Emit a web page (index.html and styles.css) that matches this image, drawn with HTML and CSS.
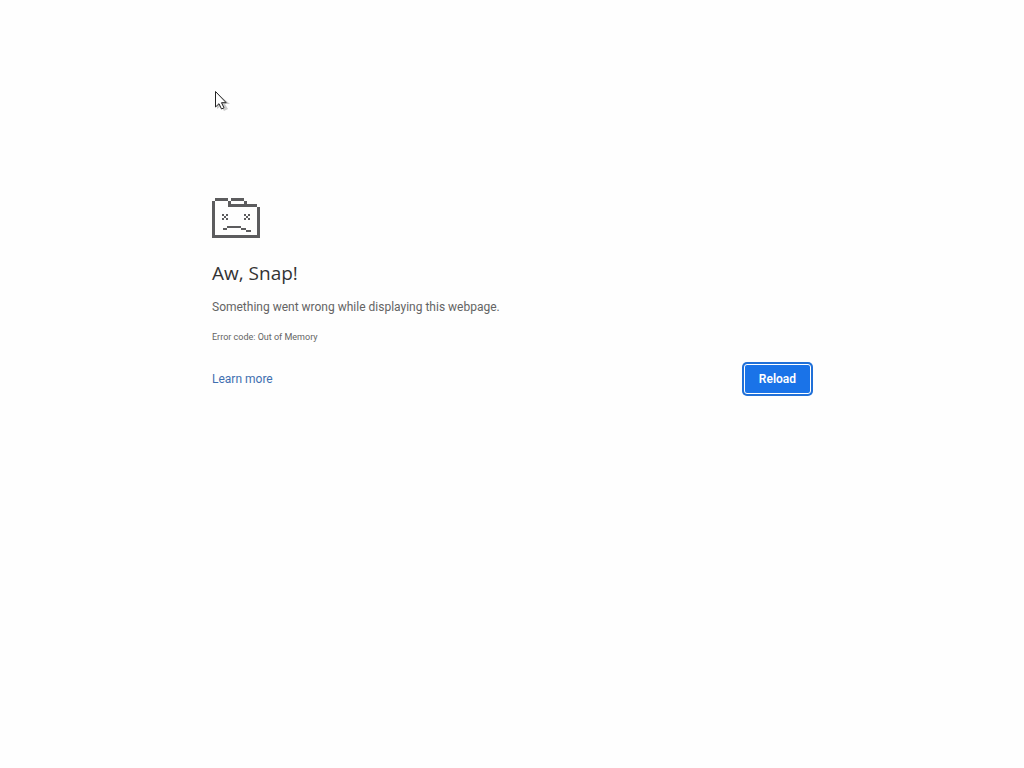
FILE: index.html
```html
<!DOCTYPE html>
<html lang="en">
<head>
    <meta charset="UTF-8">
    <meta name="viewport" content="width=device-width, initial-scale=1.0">
    <title>Aw, Snap!</title>
    <link rel="stylesheet" href="styles.css">
</head>
<body>
    <main class="container">
        <svg class="icon" viewBox="0 0 48 40" aria-hidden="true" shape-rendering="crispEdges">
            <!-- folder outline -->
            <path d="M3 0h13v3H3zM19 0h13v3H19zM16 3h3v3h-3zM32 3h3v3h-3zM16 6h29v3H16zM0 3h3v37H0zM45 9h3v31h-3zM3 37h42v3H3z"/>
            <!-- eyes -->
            <path d="M10 16h2v2h-2zM14 16h2v2h-2zM12 18h2v2h-2zM10 20h2v2h-2zM14 20h2v2h-2z"/>
            <path d="M32 16h2v2h-2zM36 16h2v2h-2zM34 18h2v2h-2zM32 20h2v2h-2zM36 20h2v2h-2z"/>
            <!-- mouth -->
            <path d="M11 30h4v2h-4zM15 28h14v2H15zM29 30h5v2h-5zM34 32h5v2h-5z"/>
        </svg>
        <h1>Aw, Snap!</h1>
        <p class="message">Something went wrong while displaying this webpage.</p>
        <p class="error-code">Error code: Out of Memory</p>
        <div class="buttons">
            <a href="#" class="learn-more">Learn more</a>
            <button type="button" class="reload">Reload</button>
        </div>
    </main>

    <svg class="cursor" viewBox="0 0 16 22" aria-hidden="true">
        <path class="cursor-shadow" d="M3 3v16l4-3 3 5 4-2-3-5h5z"/>
        <path class="cursor-arrow" d="M1.500 1.500v15.500l3.500-3.300 2.500 5.300 2.500-1.200-2.500-5.100h4.700z"/>
    </svg>
</body>
</html>
```

FILE: styles.css
```css
body {
    min-height: 100vh;
    margin: 0;
    background-color: #fefefe;
    color: #646464;
    font-family: Roboto, sans-serif;
    font-size: 12px;
    line-height: 18px;
}
.container {
    box-sizing: border-box;
    max-width: 600px;
    margin: 0 auto;
    padding: 198px 0 40px;
}
.icon {
    display: block;
    width: 48px;
    height: 40px;
    fill: #5c5c5e;
}
h1 {
    margin: 21px 0 11px;
    color: #333;
    font-family: 'Open Sans', sans-serif;
    font-size: 19px;
    font-weight: 400;
    line-height: 28px;
}
p {
    margin: 0;
}
.message {
    margin-bottom: 12px;
}
.error-code {
    font-size: 9px;
}
.buttons {
    display: flex;
    align-items: center;
    justify-content: space-between;
    margin-top: 18px;
    padding-right: 1px;
}
.learn-more {
    color: #3f6fb0;
    text-decoration: none;
}
.reload {
    height: 30px;
    padding: 0 14px;
    border: 1px solid #fff;
    border-radius: 3px;
    background-color: #1a73e8;
    box-shadow: 0 0 0 2px #2070d8;
    color: #fff;
    font-family: inherit;
    font-size: 12px;
    font-weight: 600;
    cursor: pointer;
}
.cursor {
    position: absolute;
    top: 90px;
    left: 214px;
    width: 16px;
    height: 22px;
}
.cursor-arrow {
    fill: #fff;
    stroke: #222;
}
.cursor-shadow {
    fill: #000;
    opacity: 0.2;
}
```
